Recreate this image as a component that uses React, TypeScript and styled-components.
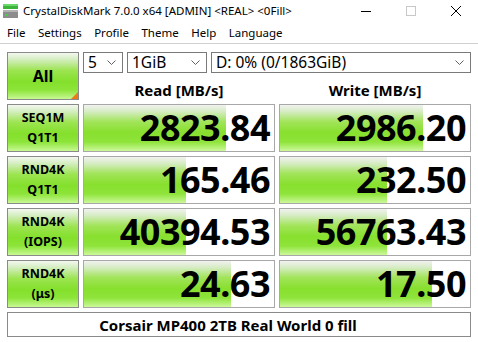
import React from "react";
import styled, { createGlobalStyle } from "styled-components";

const GlobalStyle = createGlobalStyle`
  html, body { margin: 0; padding: 0; background: #ffffff; }
  body { font-family: "Noto Sans", "Open Sans", sans-serif; color: #000; }
  * { box-sizing: border-box; }
`;

const Window = styled.div`
  width: 478px;
  height: 342px;
  background: #ffffff;
  overflow: hidden;
  display: flex;
  flex-direction: column;
`;

const TitleBar = styled.div`
  height: 22px;
  display: flex;
  align-items: center;
`;

const AppIcon = styled.div`
  width: 16px;
  height: 16px;
  margin: 0 5px 0 2px;
  display: flex;
`;

const TitleText = styled.div`
  flex: 1;
  font-size: 11.5px;
  line-height: 22px;
  white-space: nowrap;
  color: #000;
`;

const WinButton = styled.div`
  width: 45px;
  height: 22px;
  display: flex;
  align-items: center;
  justify-content: center;
`;

const MenuBar = styled.div`
  height: 22px;
  display: flex;
  align-items: center;
  padding-left: 7px;
  gap: 12.5px;
  font-size: 11.5px;
  border-bottom: 1px solid #d0d0d0;
`;

const MenuItem = styled.span`
  line-height: 20px;
`;

const Body = styled.div`
  display: grid;
  grid-template-columns: 72px 192px 192px;
  grid-template-rows: 21px 23px 48px 48px 48px 48px 25px;
  column-gap: 4px;
  row-gap: 4px;
  padding: 8px 0 0 7px;
`;

const greenGradient = `linear-gradient(to bottom,
  #f4f8f0 0%, #d4eec0 14%, #9ce450 38%, #84e02c 62%, #8ce438 80%, #c8f894 100%)`;

const AllButton = styled.div`
  grid-row: 1 / span 2;
  border: 1px solid #8a8a8a;
  background: ${greenGradient};
  display: flex;
  align-items: center;
  justify-content: center;
  font-weight: 700;
  font-size: 16px;
  position: relative;
  &::after {
    content: "";
    position: absolute;
    right: 0;
    bottom: 0;
    width: 0;
    height: 0;
    border-left: 7px solid transparent;
    border-bottom: 7px solid #f07818;
  }
`;

const ComboRow = styled.div`
  grid-column: 2 / span 2;
  display: flex;
  gap: 4px;
`;

const Combo = styled.div<{ $w?: number }>`
  ${(p) => (p.$w ? `width: ${p.$w}px;` : "flex: 1;")}
  height: 21px;
  border: 1px solid #7a7a7a;
  background: #fff;
  display: flex;
  align-items: center;
  padding: 0 6px 0 4px;
  font-size: 15.5px;
  white-space: nowrap;
`;

const ComboText = styled.span`
  flex: 1;
  line-height: 19px;
`;

const Header = styled.div`
  display: flex;
  align-items: center;
  justify-content: center;
  font-weight: 700;
  font-size: 15px;
  padding-top: 2px;
`;

const Label = styled.div`
  border: 1px solid #8a8a8a;
  background: ${greenGradient};
  display: flex;
  flex-direction: column;
  align-items: center;
  justify-content: center;
  font-weight: 700;
  font-size: 12.5px;
  line-height: 20px;
`;

const ValueBox = styled.div`
  border: 1px solid #a8a8a8;
  background: #fff;
  position: relative;
  display: flex;
  align-items: center;
  justify-content: flex-end;
  padding-right: 4px;
  overflow: hidden;
`;

const Fill = styled.div`
  position: absolute;
  left: 0;
  top: 0;
  bottom: 0;
  background: linear-gradient(to bottom,
    #f2f2f0 0%, #d6ecc4 14%, #a2e45a 36%, #88e02e 60%, #8ee43a 80%, #ccf89a 100%);
`;

const Value = styled.span`
  position: relative;
  font-weight: 700;
  font-size: 36px;
  line-height: 46px;
  letter-spacing: -0.5px;
`;

const Comment = styled.div`
  grid-column: 1 / span 3;
  border: 1px solid #8a8a8a;
  display: flex;
  align-items: center;
  justify-content: center;
  font-weight: 700;
  font-size: 15px;
  padding-right: 22px;
`;

const Chevron = () => (
  <svg width="9" height="5" viewBox="0 0 9 5">
    <path d="M0.5 0.5 L4.5 4.5 L8.5 0.5" fill="none" stroke="#606060" strokeWidth="1" />
  </svg>
);

type Row = { l1: string; l2: string; read: string; rf: number; write: string; wf: number };

const rows: Row[] = [
  { l1: "SEQ1M", l2: "Q1T1", read: "2823.84", rf: 142, write: "2986.20", wf: 143 },
  { l1: "RND4K", l2: "Q1T1", read: "165.46", rf: 102, write: "232.50", wf: 107 },
  { l1: "RND4K", l2: "(IOPS)", read: "40394.53", rf: 102, write: "56763.43", wf: 107 },
  { l1: "RND4K", l2: "(μs)", read: "24.63", rf: 147, write: "17.50", wf: 152 },
];

export default function App() {
  return (
    <>
      <GlobalStyle />
      <Window>
        <TitleBar>
          <AppIcon>
            <svg width="16" height="16" viewBox="0 0 16 16">
              <rect x="1" y="1" width="15" height="5" fill="#3cb43c" />
              <rect x="1" y="1" width="15" height="2" fill="#6ad86a" />
              <rect x="1" y="7" width="15" height="8" fill="#8c8c8c" />
              <rect x="1" y="7" width="15" height="2" fill="#b4b4b4" />
              <rect x="3" y="11" width="3" height="2" fill="#40d040" />
            </svg>
          </AppIcon>
          <TitleText>CrystalDiskMark 7.0.0 x64 [ADMIN] &lt;REAL&gt; &lt;0Fill&gt;</TitleText>
          <WinButton>
            <svg width="10" height="10" viewBox="0 0 10 10">
              <path d="M0 5.5 H10" stroke="#000" strokeWidth="1" />
            </svg>
          </WinButton>
          <WinButton>
            <svg width="10" height="10" viewBox="0 0 10 10">
              <rect x="0.5" y="0.5" width="9" height="9" fill="none" stroke="#c8c8c8" strokeWidth="1" />
            </svg>
          </WinButton>
          <WinButton>
            <svg width="10" height="10" viewBox="0 0 10 10">
              <path d="M0 0 L10 10 M10 0 L0 10" stroke="#000" strokeWidth="1" />
            </svg>
          </WinButton>
        </TitleBar>
        <MenuBar>
          <MenuItem>File</MenuItem>
          <MenuItem>Settings</MenuItem>
          <MenuItem>Profile</MenuItem>
          <MenuItem>Theme</MenuItem>
          <MenuItem>Help</MenuItem>
          <MenuItem>Language</MenuItem>
        </MenuBar>
        <Body>
          <AllButton>All</AllButton>
          <ComboRow>
            <Combo $w={40}>
              <ComboText>5</ComboText>
              <Chevron />
            </Combo>
            <Combo $w={80}>
              <ComboText>1GiB</ComboText>
              <Chevron />
            </Combo>
            <Combo>
              <ComboText>D: 0% (0/1863GiB)</ComboText>
              <Chevron />
            </Combo>
          </ComboRow>
          <Header>Read [MB/s]</Header>
          <Header>Write [MB/s]</Header>
          {rows.map((r, i) => (
            <React.Fragment key={i}>
              <Label>
                <span>{r.l1}</span>
                <span>{r.l2}</span>
              </Label>
              <ValueBox>
                <Fill style={{ width: r.rf }} />
                <Value>{r.read}</Value>
              </ValueBox>
              <ValueBox>
                <Fill style={{ width: r.wf }} />
                <Value>{r.write}</Value>
              </ValueBox>
            </React.Fragment>
          ))}
          <Comment>Corsair MP400 2TB Real World 0 fill</Comment>
        </Body>
      </Window>
    </>
  );
}
